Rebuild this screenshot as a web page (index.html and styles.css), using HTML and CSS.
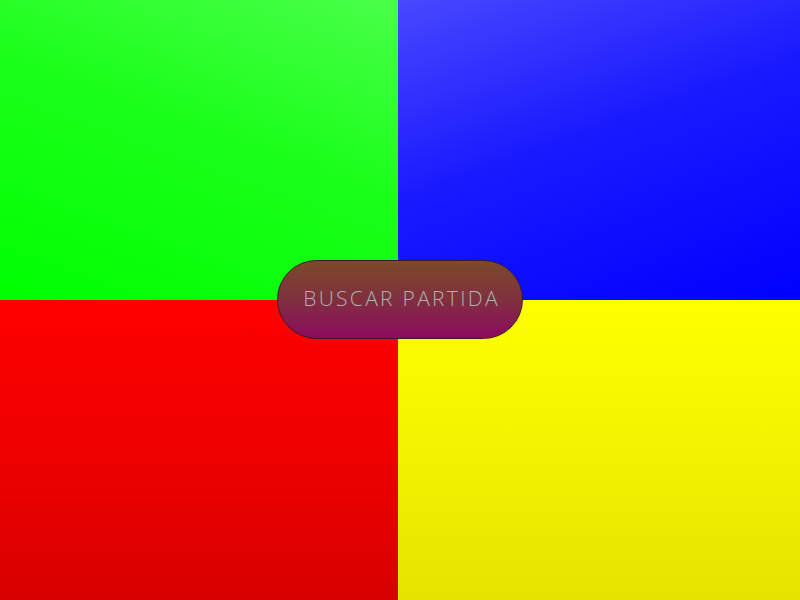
FILE: index.html
```html
<!DOCTYPE html>
<html lang="es">
<head>
<meta charset="utf-8">
<title>Buscar partida</title>
<link rel="stylesheet" href="styles.css">
</head>
<body>
<main class="board">
  <div class="quad quad-green"></div>
  <div class="quad quad-blue"></div>
  <div class="quad quad-red"></div>
  <div class="quad quad-yellow"></div>
  <button class="search-btn" type="button">BUSCAR PARTIDA</button>
</main>
</body>
</html>
```
FILE: styles.css
```css
html, body {
  margin: 0;
  padding: 0;
  height: 100%;
  overflow: hidden;
}

.board {
  position: relative;
  width: 800px;
  height: 600px;
  display: grid;
  grid-template-columns: 398px 1fr;
  grid-template-rows: 300px 300px;
}

.quad-green {
  background: linear-gradient(200deg, #4aff4a 0%, #1aff1a 45%, #00ff00 100%);
}

.quad-blue {
  background: linear-gradient(160deg, #4848ff 0%, #1a1aff 45%, #0000ff 100%);
}

.quad-red {
  background: linear-gradient(180deg, #ff0000 0%, #ee0000 50%, #d80000 100%);
}

.quad-yellow {
  background: linear-gradient(180deg, #ffff00 0%, #f3f300 50%, #e4e400 100%);
}

.search-btn {
  position: absolute;
  left: 277px;
  top: 260px;
  width: 246px;
  height: 79px;
  box-sizing: border-box;
  border: 1px solid #3a1a2a;
  border-radius: 40px;
  background: linear-gradient(180deg, #7c4a2b 0%, #80303f 50%, #8e0a60 100%);
  color: #b0b0b0;
  font-family: "Open Sans", "DejaVu Sans", sans-serif;
  font-weight: 300;
  font-size: 21px;
  letter-spacing: 2.3px;
  padding: 0 0 3px 3px;
  cursor: pointer;
}
```
